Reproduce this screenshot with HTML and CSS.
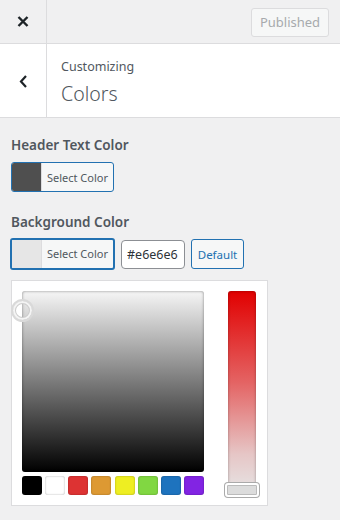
FILE: index.html
```html
<!DOCTYPE html>
<html lang="en">
<head>
    <meta charset="UTF-8">
    <meta name="viewport" content="width=device-width, initial-scale=1.0">
    <title>Customizing Colors</title>
    <link rel="stylesheet" href="styles.css">
</head>
<body>
    <div class="customizer">
        <div class="top-bar">
            <button class="close-button" aria-label="Close">
                <svg width="12" height="11" viewBox="0 0 12 11">
                    <path d="M1.5 1 L10.5 10 M10.5 1 L1.5 10" stroke="#1d2327" stroke-width="2.4" fill="none"/>
                </svg>
            </button>
            <button class="publish-button" disabled>Published</button>
        </div>

        <div class="section-title">
            <button class="back-button" aria-label="Back">
                <svg width="9" height="13" viewBox="0 0 9 13">
                    <path d="M7 1 L2 6.5 L7 12" stroke="#1d2327" stroke-width="2.2" fill="none"/>
                </svg>
            </button>
            <div class="titles">
                <span class="subtitle">Customizing</span>
                <h3 class="title">Colors</h3>
            </div>
        </div>

        <div class="controls">
            <div class="control">
                <span class="control-label">Header Text Color</span>
                <div class="control-row">
                    <button class="color-button">
                        <span class="swatch swatch-dark"></span>
                        <span class="color-text">Select Color</span>
                    </button>
                </div>
            </div>

            <div class="control">
                <span class="control-label">Background Color</span>
                <div class="control-row">
                    <button class="color-button active">
                        <span class="swatch swatch-light"></span>
                        <span class="color-text">Select Color</span>
                    </button>
                    <input type="text" class="hex-input" value="#e6e6e6">
                    <button class="default-button">Default</button>
                </div>

                <div class="picker">
                    <div class="picker-main">
                        <div class="picker-square">
                            <span class="square-marker"></span>
                        </div>
                        <div class="palette">
                            <span style="background:#000000"></span>
                            <span style="background:#ffffff"></span>
                            <span style="background:#dd3333"></span>
                            <span style="background:#dd9933"></span>
                            <span style="background:#eeee22"></span>
                            <span style="background:#81d742"></span>
                            <span style="background:#1e73be"></span>
                            <span style="background:#8224e3"></span>
                        </div>
                    </div>
                    <div class="picker-slider">
                        <span class="slider-handle"></span>
                    </div>
                </div>
            </div>
        </div>
    </div>
</body>
</html>
```

FILE: styles.css
```css
* {
    margin: 0;
    padding: 0;
    box-sizing: border-box;
    font-family: "Noto Sans", "Open Sans", sans-serif;
}

body {
    width: 340px;
    height: 520px;
    background-color: #f0f0f1;
    color: #50575e;
    overflow: hidden;
}

button {
    font-family: inherit;
    cursor: pointer;
}

.top-bar {
    display: flex;
    align-items: center;
    height: 44px;
    border-bottom: 1px solid #dcdcde;
}

.close-button {
    display: flex;
    justify-content: center;
    align-items: center;
    width: 47px;
    height: 43px;
    background: transparent;
    border: none;
    border-right: 1px solid #dcdcde;
}

.publish-button {
    margin-left: auto;
    margin-right: 11px;
    width: 78px;
    height: 29px;
    border: 1px solid #dcdcde;
    border-radius: 3px;
    background-color: #f6f7f7;
    color: #a7aaad;
    font-size: 13px;
    margin-top: 1px;
}

.section-title {
    display: flex;
    height: 74px;
    background-color: #ffffff;
    border-bottom: 1px solid #dcdcde;
}

.back-button {
    display: flex;
    justify-content: center;
    align-items: center;
    width: 47px;
    height: 73px;
    padding-top: 1px;
    background: transparent;
    border: none;
    border-right: 1px solid #dcdcde;
}

.titles {
    display: flex;
    flex-direction: column;
    padding: 14px 0 0 14px;
}

.subtitle {
    font-size: 12.5px;
    line-height: 18px;
    color: #50575e;
}

.title {
    font-size: 19.5px;
    font-weight: 300;
    line-height: 28px;
    margin-top: 4px;
    color: #50575e;
}

.controls {
    padding: 17px 11px 0 11px;
}

.control {
    margin-bottom: 20px;
}

.control-label {
    display: block;
    font-size: 13.5px;
    font-weight: 600;
    line-height: 20px;
    color: #50575e;
    margin-bottom: 7px;
}

.control-row {
    display: flex;
    align-items: center;
    gap: 6px;
    height: 30px;
}

.color-button {
    display: flex;
    align-items: stretch;
    height: 30px;
    width: 103px;
    padding: 0;
    border: 1px solid #2271b1;
    border-radius: 3px;
    background-color: #f6f7f7;
    overflow: hidden;
}

.color-button.active {
    margin: -1px 0 0 -1px;
    width: 105px;
    height: 32px;
    border-width: 2px;
}

.swatch {
    width: 30px;
    border-right: 1px solid #dcdcde;
}

.swatch-dark {
    background-color: #4f4f4f;
}

.swatch-light {
    background-color: #e6e6e6;
}

.color-text {
    flex: 1;
    display: flex;
    align-items: center;
    justify-content: center;
    font-size: 11px;
    color: #50575e;
}

.hex-input {
    width: 64px;
    height: 29px;
    padding: 0 5px;
    border: 1px solid #8c8f94;
    border-radius: 4px;
    background-color: #ffffff;
    font-size: 12.5px;
    color: #2c3338;
}

.default-button {
    width: 53px;
    height: 30px;
    border: 1px solid #2271b1;
    border-radius: 3px;
    background-color: #f6f7f7;
    color: #2271b1;
    font-size: 11.5px;
}

.picker {
    display: flex;
    gap: 24px;
    width: 257px;
    height: 226px;
    margin-top: 11px;
    padding: 10px;
    background-color: #ffffff;
    border: 1px solid #dcdcde;
}

.picker-main {
    display: flex;
    flex-direction: column;
    gap: 4px;
    width: 182px;
}

.picker-square {
    position: relative;
    height: 182px;
    border-radius: 3px;
    background: linear-gradient(to bottom, #f6f6f6, #000000);
    box-shadow: inset 0 0 3px rgba(0, 0, 0, 0.45);
}

.square-marker {
    position: absolute;
    left: -11px;
    top: 8px;
    width: 23px;
    height: 23px;
    border-radius: 50%;
    border: 2px solid #d9d9d9;
    box-shadow: inset 0 0 0 2px #f4f4f4, inset 0 0 0 3px #cccccc;
}

.palette {
    display: flex;
    justify-content: space-between;
}

.palette span {
    width: 20px;
    height: 19px;
    border-radius: 3px;
    box-shadow: inset 0 0 2px rgba(0, 0, 0, 0.35);
}

.picker-slider {
    position: relative;
    width: 28px;
    height: 204px;
    border-radius: 3px;
    background: linear-gradient(to bottom, #e10000, #e46464 45%, #e6c6c6 80%, #e6e6e6);
    box-shadow: inset 0 0 3px rgba(0, 0, 0, 0.35);
}

.slider-handle {
    position: absolute;
    left: -3px;
    bottom: -2px;
    width: 34px;
    height: 14px;
    border: 2px solid #ffffff;
    border-radius: 3px;
    background-color: #dcdcdc;
    box-shadow: 0 0 0 1px #aaaaaa, inset 0 0 0 1px #bbbbbb;
}
```
